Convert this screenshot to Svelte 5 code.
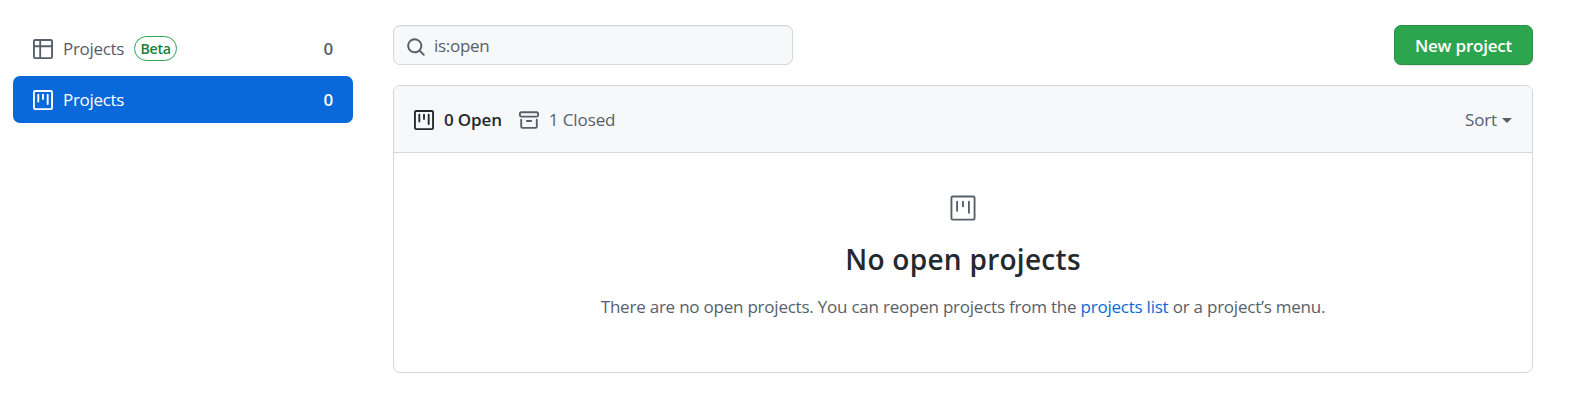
<script>
  const icons = {
    table: 'M0 1.75C0 .784.784 0 1.75 0h12.5C15.216 0 16 .784 16 1.75v12.5A1.75 1.75 0 0 1 14.25 16H1.75A1.75 1.75 0 0 1 0 14.25ZM6.5 6.5v8h7.75a.25.25 0 0 0 .25-.25V6.5Zm8-1.5V1.75a.25.25 0 0 0-.25-.25H6.5V5Zm-13 1.5v7.75c0 .138.112.25.25.25H5v-8ZM5 5V1.5H1.75a.25.25 0 0 0-.25.25V5Z',
    project: 'M1.75 0A1.75 1.75 0 0 0 0 1.75v12.5C0 15.216.784 16 1.75 16h12.5A1.75 1.75 0 0 0 16 14.25V1.75A1.75 1.75 0 0 0 14.25 0H1.75zM1.5 1.75a.25.25 0 0 1 .25-.25h12.5a.25.25 0 0 1 .25.25v12.5a.25.25 0 0 1-.25.25H1.75a.25.25 0 0 1-.25-.25V1.75zM11.75 3a.75.75 0 0 0-.75.75v7.5a.75.75 0 0 0 1.5 0v-7.5a.75.75 0 0 0-.75-.75zm-8.25.75a.75.75 0 0 1 1.5 0v5.5a.75.75 0 0 1-1.5 0v-5.5zM8 3a.75.75 0 0 0-.75.75v3.5a.75.75 0 0 0 1.5 0v-3.5A.75.75 0 0 0 8 3z',
    archive: 'M1.75 2.5a.25.25 0 0 0-.25.25v1.5c0 .138.112.25.25.25h12.5a.25.25 0 0 0 .25-.25v-1.5a.25.25 0 0 0-.25-.25H1.75zM0 2.75C0 1.784.784 1 1.75 1h12.5c.966 0 1.75.784 1.75 1.75v1.5A1.75 1.75 0 0 1 14.25 6H1.75A1.75 1.75 0 0 1 0 4.25v-1.5zM1.75 7a.75.75 0 0 1 .75.75v5.5c0 .138.112.25.25.25h10.5a.25.25 0 0 0 .25-.25v-5.5a.75.75 0 0 1 1.5 0v5.5A1.75 1.75 0 0 1 13.25 15H2.75A1.75 1.75 0 0 1 1 13.25v-5.5A.75.75 0 0 1 1.75 7zm4.5 1a.75.75 0 0 0 0 1.5h3.5a.75.75 0 1 0 0-1.5h-3.5z',
    search: 'M11.5 7a4.499 4.499 0 1 1-8.998 0A4.499 4.499 0 0 1 11.5 7zm-.82 4.74a6 6 0 1 1 1.06-1.06l3.04 3.04a.75.75 0 1 1-1.06 1.06l-3.04-3.04z'
  };
</script>

{#snippet icon(name)}
  <svg class="icon" viewBox="0 0 16 16" aria-hidden="true"><path fill-rule="evenodd" d={icons[name]} /></svg>
{/snippet}

<div class="page">
  <nav>
    <a class="item" href="#beta">
      {@render icon('table')}<span class="label">Projects</span><span class="beta">Beta</span><b>0</b>
    </a>
    <a class="item active" href="#projects">
      {@render icon('project')}<span class="label">Projects</span><b>0</b>
    </a>
  </nav>
  <main>
    <div class="toolbar">
      <div class="search">{@render icon('search')}<span>is:open</span></div>
      <button class="new"><span>New project</span></button>
    </div>
    <section>
      <header>
        {@render icon('project')}<span class="open">0 Open</span>
        {@render icon('archive')}<span class="closed">1 Closed</span>
        <span class="sort">Sort</span><i class="caret"></i>
      </header>
      <div class="blank">
        <svg class="big" viewBox="0 0 24 24" aria-hidden="true">
          <rect x="2.75" y="2.75" width="18.5" height="18.5" rx="1" />
          <path d="M7.25 6.9v7.3M12 6.9v3.8M16.75 6.9v8.9" />
        </svg>
        <h3>No open projects</h3>
        <p>There are no open projects. You can reopen projects from the <a href="#list">projects list</a> or a project’s menu.</p>
      </div>
    </section>
  </main>
</div>

<style>
  :global(body) { background: #fff; }
  .page {
    display: flex;
    gap: 40px;
    box-sizing: border-box;
    height: 407px;
    padding: 25px 36px 34px 13px;
    font: 400 17px/26px "Open Sans", "Noto Sans", sans-serif;
    letter-spacing: -0.3px;
    color: #57606a;
  }
  .icon { width: 20px; height: 20px; flex: none; fill: currentColor; }
  nav { width: 340px; flex: none; }
  .item {
    display: flex;
    align-items: center;
    box-sizing: border-box;
    height: 47px;
    padding: 0 20px;
    margin-bottom: 4px;
    border-radius: 7px;
    color: #57606a;
    text-decoration: none;
  }
  .item.active { background: #0969da; color: #fff; }
  .label { margin-left: 10px; }
  .item b { margin-left: auto; font-weight: 600; }
  .beta {
    box-sizing: border-box;
    width: 43px;
    height: 25px;
    margin-left: 10px;
    border: 1px solid #2da44e;
    border-radius: 13px;
    font-size: 14.2px;
    font-weight: 600;
    line-height: 24px;
    text-align: center;
    color: #1a7f37;
  }
  main { flex: 1; min-width: 0; display: flex; flex-direction: column; }
  .toolbar { display: flex; justify-content: space-between; height: 40px; margin-bottom: 20px; }
  .search {
    display: flex;
    align-items: center;
    box-sizing: border-box;
    width: 400px;
    padding: 3px 12px 0;
    border: 1px solid #d0d7de;
    border-radius: 7px;
    background: #f6f8fa;
    box-shadow: inset 0 1px 0 rgba(208, 215, 222, 0.2);
  }
  .search span { margin: -2px 0 0 8px; }
  .new {
    box-sizing: border-box;
    width: 139px;
    padding: 1px 0 0;
    border: 1px solid #2a9147;
    border-radius: 7px;
    background: #2da44e;
    box-shadow: 0 1px 0 rgba(27, 31, 36, 0.1);
    color: #fff;
    font: inherit;
    font-weight: 600;
    letter-spacing: -0.2px;
  }
  section {
    flex: 1;
    display: flex;
    flex-direction: column;
    border: 1px solid #d0d7de;
    border-radius: 7px;
    overflow: hidden;
  }
  header {
    display: flex;
    align-items: center;
    box-sizing: border-box;
    height: 67px;
    padding: 2px 20px 0;
    border-bottom: 1px solid #d0d7de;
    background: #f6f8fa;
  }
  header .icon:first-child { color: #24292f; }
  .open { margin: 0 17px 0 10px; font-weight: 600; letter-spacing: -0.15px; color: #24292f; }
  .closed { margin-left: 10px; letter-spacing: -0.1px; }
  .sort { margin-left: auto; letter-spacing: -0.15px; }
  .caret {
    margin-left: 5px;
    border: 5px solid transparent;
    border-top-color: currentColor;
    border-bottom: 0;
  }
  .blank { display: flex; flex-direction: column; align-items: center; padding-top: 40px; }
  .big { width: 30px; height: 30px; fill: none; stroke: currentColor; stroke-width: 1.5; stroke-linecap: round; }
  h3 { margin: 17px 0 0; font-size: 28px; line-height: 39px; font-weight: 600; letter-spacing: 0.28px; color: #24292f; }
  p { margin: 15px 0 0; white-space: nowrap; letter-spacing: -0.225px; }
  p a { color: #0969da; text-decoration: none; }
</style>
